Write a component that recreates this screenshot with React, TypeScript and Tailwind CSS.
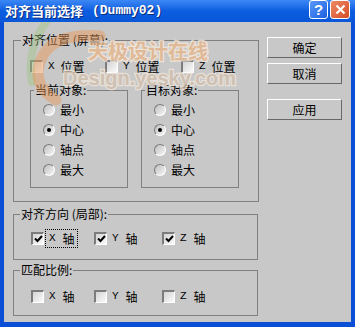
import React from "react";

const Check = ({ checked = false }: { checked?: boolean }) => (
  <span className="w-[13px] h-[13px] shrink-0 flex items-center justify-center border-t-2 border-l-2 border-r border-b border-t-[#7c7c7c] border-l-[#7c7c7c] border-r-white border-b-white bg-linear-to-br from-[#d4d4d4] to-[#fbfbfb]">
    {checked && (
      <svg width="9" height="8" viewBox="0 0 9 8">
        <path d="M1 3.5 L3.5 6 L8 1" stroke="#000" strokeWidth="2" fill="none" />
      </svg>
    )}
  </span>
);

const Radio = ({ checked = false }: { checked?: boolean }) => (
  <span className="w-[12px] h-[12px] shrink-0 rounded-full flex items-center justify-center border-t border-l border-r border-b border-t-[#7c7c7c] border-l-[#7c7c7c] border-r-white border-b-white bg-linear-to-br from-[#c0c0c0] to-[#f6f6f6]">
    {checked && <span className="w-[4px] h-[4px] rounded-full bg-black" />}
  </span>
);

const Letter = ({ children }: { children: React.ReactNode }) => (
  <span className="block [font-family:'Liberation_Mono',monospace] text-[11px] leading-[13px]">{children}</span>
);

const Button = ({ label, className = "" }: { label: string; className?: string }) => (
  <div
    className={`w-[75px] h-[21px] flex items-center justify-center border border-t-white border-l-white border-r-[#686868] border-b-[#686868] text-[12px] ${className}`}
  >
    {label}
  </div>
);

const radios = ["最小", "中心", "轴点", "最大"];

const RadioGroup = ({ title }: { title: string }) => (
  <fieldset className="w-[98px] h-[105px] border border-[#808080] px-[3px]">
    <legend className="px-[1px] text-[12px] leading-[14px]">{title}</legend>
    <div className="pl-[9px] pt-[3px] flex flex-col">
      {radios.map((r) => (
        <div key={r} className="h-[20px] flex items-center">
          <Radio checked={r === "中心"} />
          <span className="ml-[5px] text-[12px] leading-[14px]">{r}</span>
        </div>
      ))}
    </div>
  </fieldset>
);

const AxisRow = ({ checked, focus }: { checked: boolean; focus?: boolean }) => (
  <div className="pl-[17px] flex items-center h-[13px]">
    {[
      ["X", "w-[63px]"],
      ["Y", "w-[68px]"],
      ["Z", "w-[70px]"],
    ].map(([l, w]) => (
      <div key={l} className={`${w} flex items-center`}>
        <Check checked={checked} />
        <span
          className={`ml-[4px] pl-[1px] flex items-center ${
            focus && l === "X" ? "outline-1 outline-dotted outline-black outline-offset-[2px]" : ""
          }`}
        >
          <Letter>{l}</Letter>
          <span className="ml-[7px] text-[12px] leading-[13px]">轴</span>
        </span>
      </div>
    ))}
  </div>
);

const Watermark = () => (
  <svg className="absolute left-0 top-0 pointer-events-none" width="347" height="120" viewBox="0 0 347 120">
    <path d="M42 0 Q22 28 28 60" stroke="#9cc27a" strokeWidth="8" fill="none" opacity="0.4" strokeLinecap="round" />
    <path d="M96 14 Q46 10 36 40 Q28 64 52 78" stroke="#e89a5c" strokeWidth="11" fill="none" opacity="0.5" strokeLinecap="round" />
    <text
      x="84"
      y="37"
      fontSize="20"
      fontWeight="bold"
      fill="#e8b487"
      stroke="#f8ece0"
      strokeWidth="2.5"
      paintOrder="stroke"
      opacity="0.75"
      fontFamily="'Noto Sans CJK SC', sans-serif"
    >
      天极设计在线
    </text>
    <text
      x="59"
      y="63"
      fontSize="20"
      fontWeight="bold"
      fill="#d0c0ae"
      stroke="#f1e7dc"
      strokeWidth="2.5"
      paintOrder="stroke"
      opacity="0.8"
      fontFamily="'Liberation Sans', Arial, sans-serif"
    >
      Design.yesky.com
    </text>
  </svg>
);

export default function App() {
  return (
    <div className="w-[355px] h-[327px] flex flex-col bg-[#0a4fd6] text-black [font-family:'Noto_Sans_CJK_SC',sans-serif]">
      <div className="h-[22px] shrink-0 flex items-center pl-[5px] pr-[5px] bg-linear-to-b from-[#3c88f6] via-[#0b5de0] to-[#0a57d8]">
        <span className="text-white font-bold text-[13px] leading-[16px] [text-shadow:1px_1px_0_#0a2d80] flex items-center">
          对齐当前选择
          <span className="ml-[9px] [font-family:'Liberation_Mono',monospace] text-[13px]">(Dummy02)</span>
        </span>
        <div className="ml-auto flex items-center gap-[2px] -mt-[3px]">
          <div className="w-[19px] h-[19px] rounded-[3px] border border-white bg-linear-to-br from-[#5a98f8] to-[#1c5fe0] flex items-center justify-center text-white font-bold text-[15px] leading-none [font-family:'Liberation_Sans',sans-serif]">
            ?
          </div>
          <div className="w-[20px] h-[19px] rounded-[3px] border border-white bg-linear-to-br from-[#ec8a66] to-[#d64a22] flex items-center justify-center">
            <svg width="11" height="11" viewBox="0 0 11 11">
              <path d="M1.5 1.5 L9.5 9.5 M9.5 1.5 L1.5 9.5" stroke="#fff" strokeWidth="2.2" />
            </svg>
          </div>
        </div>
      </div>

      <div className="flex-1 mx-[4px] mb-[5px] bg-[#c8c8c8] relative flex">
        <div className="pl-[9px] pt-[11px] flex flex-col">
          <fieldset className="w-[245px] h-[169px] border border-[#808080] px-[7px]">
            <legend className="px-[1px] text-[12px] leading-[14px]">对齐位置 (屏幕):</legend>
            <div className="pl-[9px] pt-[13px]">
              <div className="flex items-center h-[13px]">
                {[
                  ["X", "w-[75px]"],
                  ["Y", "w-[76px]"],
                  ["Z", "w-[70px]"],
                ].map(([l, w]) => (
                  <div key={l} className={`${w} flex items-center`}>
                    <Check />
                    <span className="ml-[5px]">
                      <Letter>{l}</Letter>
                    </span>
                    <span className="ml-[6px] text-[12px] leading-[13px]">位置</span>
                  </div>
                ))}
              </div>
              <div className="mt-[10px] flex gap-[13px]">
                <RadioGroup title="当前对象:" />
                <RadioGroup title="目标对象:" />
              </div>
            </div>
          </fieldset>

          <fieldset className="mt-[5px] w-[245px] h-[53px] border border-[#808080] px-[6px]">
            <legend className="px-[1px] text-[12px] leading-[14px]">对齐方向 (局部):</legend>
            <div className="pt-[11px] -ml-[6px]">
              <AxisRow checked focus />
            </div>
          </fieldset>

          <fieldset className="mt-[3px] w-[245px] h-[53px] border border-[#808080] px-[6px]">
            <legend className="px-[1px] text-[12px] leading-[14px]">匹配比例:</legend>
            <div className="pt-[13px] -ml-[6px]">
              <AxisRow checked={false} />
            </div>
          </fieldset>
        </div>

        <div className="ml-[8px] pt-[15px] flex flex-col">
          <Button label="确定" />
          <Button label="取消" className="mt-[5px]" />
          <Button label="应用" className="mt-[15px]" />
        </div>

        <Watermark />
      </div>
    </div>
  );
}
